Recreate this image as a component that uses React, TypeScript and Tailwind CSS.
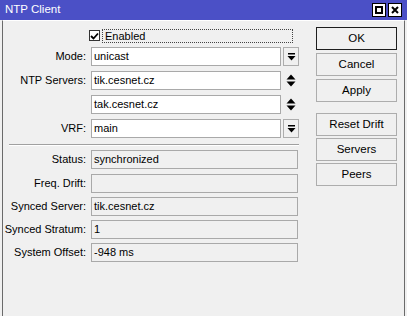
import React from 'react';

const font = { fontFamily: '"Liberation Sans", Arial, sans-serif' };

const DropBtn: React.FC = () => (
  <div className="w-[16px] h-[19px] ml-[2px] border border-[#adadad] bg-[#f0f0f0] flex items-center justify-center">
    <svg width="9" height="8" viewBox="0 0 9 8">
      <rect x="1" y="0" width="7" height="1.5" fill="#000" />
      <path d="M0.5 3 L8.5 3 L4.5 7.5 Z" fill="#000" />
    </svg>
  </div>
);

const UpDown: React.FC = () => (
  <div className="w-[16px] h-[19px] ml-[2px] flex items-center justify-center">
    <svg width="10" height="13" viewBox="0 0 10 13">
      <path d="M0.5 5.5 L9.5 5.5 L5 0.5 Z" fill="#000" />
      <path d="M0.5 7.5 L9.5 7.5 L5 12.5 Z" fill="#000" />
    </svg>
  </div>
);

const Row: React.FC<{ label?: string; children: React.ReactNode; className?: string }> = ({ label, children, className = '' }) => (
  <div className={`flex items-center h-[19px] ${className}`}>
    <div className="w-[84px] text-right pr-[1px]">{label ? `${label}:` : ''}</div>
    <div className="flex items-center ml-[4px]">{children}</div>
  </div>
);

const Field: React.FC<{ value: string; wide?: boolean; readOnly?: boolean }> = ({ value, wide, readOnly }) => (
  <div
    className={`h-[19px] border border-[#a9a9a9] pl-[2px] leading-[17px] whitespace-nowrap ${wide ? 'w-[207px]' : 'w-[190px]'} ${readOnly ? 'bg-[#f0f0f0]' : 'bg-white'}`}
  >
    {value}
  </div>
);

const Btn: React.FC<{ label: string; primary?: boolean; className?: string }> = ({ label, primary, className = '' }) => (
  <div
    className={`h-[23px] w-[81px] flex items-center justify-center bg-[#f0f0f0] border ${primary ? 'border-[#1e1e1e]' : 'border-[#adadad]'} ${className}`}
  >
    {label}
  </div>
);

export default function App() {
  return (
    <div className="w-[407px] h-[316px] bg-[#f0f0f0] flex flex-col text-[11px] text-black overflow-hidden" style={font}>
      {/* title bar */}
      <div className="h-[20px] bg-[#4b50c6] flex items-center justify-between pl-[5px] pr-[5px] text-white">
        <span className="text-[11.5px]">NTP Client</span>
        <div className="flex gap-[2px]">
          <div className="w-[14px] h-[14px] bg-white border border-black flex items-center justify-center">
            <div className="w-[8px] h-[8px] border-2 border-black" />
          </div>
          <div className="w-[14px] h-[14px] bg-white border border-black flex items-center justify-center">
            <svg width="8" height="8" viewBox="0 0 8 8">
              <path d="M1 1 L7 7 M7 1 L1 7" stroke="#000" strokeWidth="2" />
            </svg>
          </div>
        </div>
      </div>

      <div className="flex-1 flex mx-[2px] border-x border-[#6a6a6a] border-t border-t-white">
        {/* form */}
        <div className="w-[298px] flex flex-col">
          <div className="flex items-center h-[15px] mt-[7px] ml-[86px]">
            <div className="w-[11px] h-[11px] border border-[#333] bg-white flex items-center justify-center">
              <svg width="9" height="8" viewBox="0 0 9 8">
                <path d="M1 4 L3.5 6.5 L8 1.5" stroke="#000" strokeWidth="1.8" fill="none" />
              </svg>
            </div>
            <div className="ml-[2px] w-[191px] h-[14px] border border-dotted border-[#444] pl-[2px] leading-[13px]">Enabled</div>
          </div>

          <Row label="Mode" className="mt-[4px]">
            <Field value="unicast" />
            <DropBtn />
          </Row>
          <Row label="NTP Servers" className="mt-[5px]">
            <Field value="tik.cesnet.cz" />
            <UpDown />
          </Row>
          <Row className="mt-[5px]">
            <Field value="tak.cesnet.cz" />
            <UpDown />
          </Row>
          <Row label="VRF" className="mt-[5px]">
            <Field value="main" />
            <DropBtn />
          </Row>

          <div className="ml-[6px] w-[290px] mt-[6px] border-t border-[#a0a0a0] border-b border-b-white" />

          <Row label="Status" className="mt-[4px]">
            <Field value="synchronized" wide readOnly />
          </Row>
          <Row label="Freq. Drift" className="mt-[5px]">
            <Field value="" wide readOnly />
          </Row>
          <Row label="Synced Server" className="mt-[4px]">
            <Field value="tik.cesnet.cz" wide readOnly />
          </Row>
          <Row label="Synced Stratum" className="mt-[4px]">
            <Field value="1" wide readOnly />
          </Row>
          <Row label="System Offset" className="mt-[4px]">
            <Field value="-948 ms" wide readOnly />
          </Row>
        </div>

        {/* buttons */}
        <div className="flex flex-col ml-[15px] mt-[6px] text-[11.5px]">
          <Btn label="OK" primary />
          <Btn label="Cancel" className="mt-[3px]" />
          <Btn label="Apply" className="mt-[3px]" />
          <Btn label="Reset Drift" className="mt-[11px]" />
          <Btn label="Servers" className="mt-[2px]" />
          <Btn label="Peers" className="mt-[2px]" />
        </div>
      </div>
    </div>
  );
}
